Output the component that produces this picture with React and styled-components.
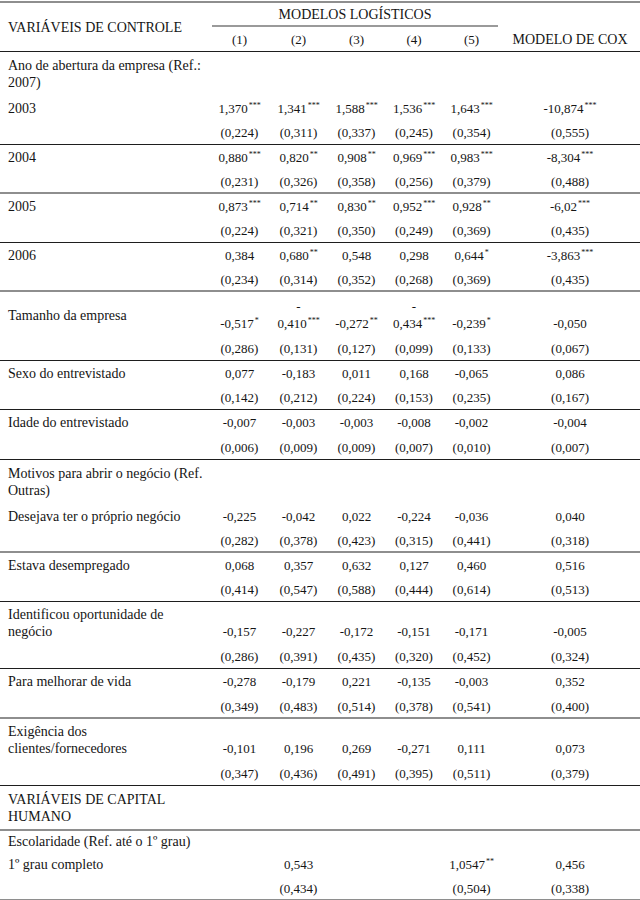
import styled, { createGlobalStyle } from 'styled-components'

const GlobalStyle = createGlobalStyle`
  html, body {
    margin: 0;
    padding: 0;
    background: #fff;
  }
  body {
    font-family: "Liberation Serif", "Times New Roman", serif;
    color: #151515;
  }
`

const RULES = {
  dark: '1px solid #1e1e1e',
  gray: '2px solid #8e8e8e',
  none: 'none',
}

const Table = styled.table`
  width: 640px;
  border-collapse: collapse;
  table-layout: fixed;
  font-family: "Liberation Serif", "Times New Roman", serif;
  font-size: 13px;
  line-height: 17px;
  color: #151515;
  border-top: 2px solid #8e8e8e;
  margin-top: 1px;
`

const HeadRow = styled.tr`
  border-bottom: ${({ $rule }) => RULES[$rule || 'none']};
`

const HeadCell = styled.th`
  font-weight: normal;
  font-size: 14px;
  padding: ${({ $tight }) => ($tight ? '3px 0 0' : '4px 0 3px')};
  text-align: ${({ $align }) => $align || 'center'};
  vertical-align: ${({ $valign }) => $valign || 'middle'};
  padding-left: ${({ $align }) => ($align === 'left' ? '8px' : '0')};
  white-space: nowrap;
`

const NumberHead = styled(HeadCell)`
  font-size: 13px;
`

const GroupTitle = styled.span`
  display: block;
  margin: 0 2px;
  padding-bottom: 2px;
  border-bottom: 2px solid #9a9a9a;
`

// $pad: vertical padding of the cells in this row, [top, bottom]
const Row = styled.tr`
  border-bottom: ${({ $rule }) => RULES[$rule || 'none']};

  & > td {
    padding-top: ${({ $pad }) => ($pad ? $pad[0] : 4)}px;
    padding-bottom: ${({ $pad }) => ($pad ? $pad[1] : 3)}px;
  }
`

const LabelCell = styled.td`
  padding-left: 8px;
  padding-right: 8px;
  font-size: 14px;
  text-align: left;
  vertical-align: middle;
  white-space: nowrap;
`

const ValueCell = styled.td`
  padding-left: 0;
  padding-right: 0;
  text-align: center;
  vertical-align: bottom;
  white-space: nowrap;
`

const Stars = styled.sup`
  font-size: 8px;
  line-height: 0;
  vertical-align: 5px;
  margin-left: 1px;
`

const controlGroups = [
  { section: ['Ano de abertura da empresa (Ref.:', '2007)'] },
  {
    label: ['2003'],
    values: ['1,370***', '1,341***', '1,588***', '1,536***', '1,643***', '-10,874***'],
    se: ['(0,224)', '(0,311)', '(0,337)', '(0,245)', '(0,354)', '(0,555)'],
    rule: 'dark',
  },
  {
    label: ['2004'],
    values: ['0,880***', '0,820**', '0,908**', '0,969***', '0,983***', '-8,304***'],
    se: ['(0,231)', '(0,326)', '(0,358)', '(0,256)', '(0,379)', '(0,488)'],
    rule: 'gray',
  },
  {
    label: ['2005'],
    values: ['0,873***', '0,714**', '0,830**', '0,952***', '0,928**', '-6,02***'],
    se: ['(0,224)', '(0,321)', '(0,350)', '(0,249)', '(0,369)', '(0,435)'],
    rule: 'dark',
  },
  {
    label: ['2006'],
    values: ['0,384', '0,680**', '0,548', '0,298', '0,644*', '-3,863***'],
    se: ['(0,234)', '(0,314)', '(0,352)', '(0,268)', '(0,369)', '(0,435)'],
    rule: 'gray',
  },
  {
    label: ['Tamanho da empresa'],
    values: ['-0,517*', '-|0,410***', '-0,272**', '-|0,434***', '-0,239*', '-0,050'],
    se: ['(0,286)', '(0,131)', '(0,127)', '(0,099)', '(0,133)', '(0,067)'],
    rule: 'dark',
    pad: [6, 4],
  },
  {
    label: ['Sexo do entrevistado'],
    values: ['0,077', '-0,183', '0,011', '0,168', '-0,065', '0,086'],
    se: ['(0,142)', '(0,212)', '(0,224)', '(0,153)', '(0,235)', '(0,167)'],
    rule: 'dark',
  },
  {
    label: ['Idade do entrevistado'],
    values: ['-0,007', '-0,003', '-0,003', '-0,008', '-0,002', '-0,004'],
    se: ['(0,006)', '(0,009)', '(0,009)', '(0,007)', '(0,010)', '(0,007)'],
    rule: 'dark',
    pad: [4, 4],
  },
  { section: ['Motivos para abrir o negócio (Ref.', 'Outras)'] },
  {
    label: ['Desejava ter o próprio negócio'],
    values: ['-0,225', '-0,042', '0,022', '-0,224', '-0,036', '0,040'],
    se: ['(0,282)', '(0,378)', '(0,423)', '(0,315)', '(0,441)', '(0,318)'],
    rule: 'gray',
  },
  {
    label: ['Estava desempregado'],
    values: ['0,068', '0,357', '0,632', '0,127', '0,460', '0,516'],
    se: ['(0,414)', '(0,547)', '(0,588)', '(0,444)', '(0,614)', '(0,513)'],
    rule: 'dark',
  },
  {
    label: ['Identificou oportunidade de', 'negócio'],
    values: ['-0,157', '-0,227', '-0,172', '-0,151', '-0,171', '-0,005'],
    se: ['(0,286)', '(0,391)', '(0,435)', '(0,320)', '(0,452)', '(0,324)'],
    rule: 'dark',
    pad: [4, 4],
  },
  {
    label: ['Para melhorar de vida'],
    values: ['-0,278', '-0,179', '0,221', '-0,135', '-0,003', '0,352'],
    se: ['(0,349)', '(0,483)', '(0,514)', '(0,378)', '(0,541)', '(0,400)'],
    rule: 'gray',
    pad: [4, 4],
  },
  {
    label: ['Exigência dos', 'clientes/fornecedores'],
    values: ['-0,101', '0,196', '0,269', '-0,271', '0,111', '0,073'],
    se: ['(0,347)', '(0,436)', '(0,491)', '(0,395)', '(0,511)', '(0,379)'],
    rule: 'dark',
    pad: [4, 4],
  },
  { section: ['VARIÁVEIS DE CAPITAL', 'HUMANO'], rule: 'gray', pad: [5, 4] },
  { section: ['Escolaridade (Ref. até o 1º grau)'], pad: [2, 3] },
  {
    label: ['1º grau completo'],
    values: ['', '0,543', '', '', '1,0547**', '0,456'],
    se: ['', '(0,434)', '', '', '(0,504)', '(0,338)'],
    rule: 'gray',
    pad: [3, 3],
  },
]

const Lines = ({ lines }) =>
  lines.map((line, i) => (
    <span key={i}>
      {i > 0 && <br />}
      {line}
    </span>
  ))

const Value = ({ text }) => {
  if (!text) return null
  return text.split('|').map((part, i) => {
    const [, num, stars] = part.match(/^(.*?)(\**)$/)
    return (
      <span key={i}>
        {i > 0 && <br />}
        {num}
        {stars && <Stars>{stars}</Stars>}
      </span>
    )
  })
}

const Group = ({ group }) => {
  if (group.section) {
    return (
      <Row $rule={group.rule} $pad={group.pad || [5, 5]}>
        <LabelCell>
          <Lines lines={group.section} />
        </LabelCell>
        <ValueCell colSpan={6} />
      </Row>
    )
  }
  // a 2px grey rule takes one pixel from the row above it
  const sePad = group.rule === 'gray' ? [4, 2] : [4, 3]
  return (
    <>
      <Row $pad={group.pad}>
        <LabelCell>
          <Lines lines={group.label} />
        </LabelCell>
        {group.values.map((v, i) => (
          <ValueCell key={i}>
            <Value text={v} />
          </ValueCell>
        ))}
      </Row>
      <Row $rule={group.rule} $pad={sePad}>
        <LabelCell />
        {group.se.map((v, i) => (
          <ValueCell key={i}>{v}</ValueCell>
        ))}
      </Row>
    </>
  )
}

export default function App() {
  return (
    <>
      <GlobalStyle />
      <Table>
        <colgroup>
          <col style={{ width: 210 }} />
          <col style={{ width: 59 }} />
          <col style={{ width: 59 }} />
          <col style={{ width: 57 }} />
          <col style={{ width: 58 }} />
          <col style={{ width: 57 }} />
          <col style={{ width: 140 }} />
        </colgroup>
        <thead>
          <HeadRow>
            <HeadCell rowSpan={2} $align="left">
              VARIÁVEIS DE CONTROLE
            </HeadCell>
            <HeadCell colSpan={5} $tight>
              <GroupTitle>MODELOS LOGÍSTICOS</GroupTitle>
            </HeadCell>
            <HeadCell rowSpan={2} $valign="bottom">
              MODELO DE COX
            </HeadCell>
          </HeadRow>
          <HeadRow $rule="dark">
            <NumberHead>(1)</NumberHead>
            <NumberHead>(2)</NumberHead>
            <NumberHead>(3)</NumberHead>
            <NumberHead>(4)</NumberHead>
            <NumberHead>(5)</NumberHead>
          </HeadRow>
        </thead>
        <tbody>
          {controlGroups.map((g, i) => (
            <Group key={i} group={g} />
          ))}
        </tbody>
      </Table>
    </>
  )
}
